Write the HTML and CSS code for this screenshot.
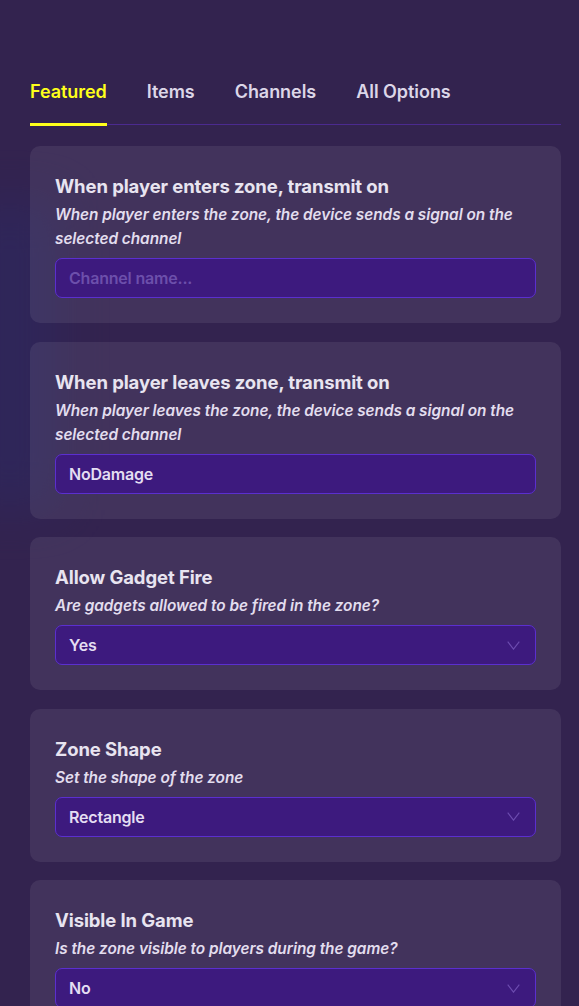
FILE: index.html
```html
<!DOCTYPE html>
<html lang="en">
<head>
<meta charset="utf-8">
<title>Zone options</title>
<link rel="stylesheet" href="styles.css">
</head>
<body>
<div class="glow"></div>
<main class="panel">
  <nav class="tabs">
    <span class="tab active">Featured</span>
    <span class="tab">Items</span>
    <span class="tab">Channels</span>
    <span class="tab">All Options</span>
  </nav>

  <section class="card">
    <h3 class="title">When player enters zone, transmit on</h3>
    <p class="desc">When player enters the zone, the device sends a signal on the selected channel</p>
    <div class="field placeholder">Channel name...</div>
  </section>

  <section class="card">
    <h3 class="title">When player leaves zone, transmit on</h3>
    <p class="desc">When player leaves the zone, the device sends a signal on the selected channel</p>
    <div class="field">NoDamage</div>
  </section>

  <section class="card">
    <h3 class="title">Allow Gadget Fire</h3>
    <p class="desc">Are gadgets allowed to be fired in the zone?</p>
    <div class="field select">Yes<svg class="chev" viewBox="0 0 13 9" width="13" height="9"><path d="M0.7 0.7 L6.5 8.2 L12.3 0.7" fill="none" stroke="currentColor" stroke-width="1.1"/></svg></div>
  </section>

  <section class="card">
    <h3 class="title">Zone Shape</h3>
    <p class="desc">Set the shape of the zone</p>
    <div class="field select">Rectangle<svg class="chev" viewBox="0 0 13 9" width="13" height="9"><path d="M0.7 0.7 L6.5 8.2 L12.3 0.7" fill="none" stroke="currentColor" stroke-width="1.1"/></svg></div>
  </section>

  <section class="card">
    <h3 class="title">Visible In Game</h3>
    <p class="desc">Is the zone visible to players during the game?</p>
    <div class="field select">No<svg class="chev" viewBox="0 0 13 9" width="13" height="9"><path d="M0.7 0.7 L6.5 8.2 L12.3 0.7" fill="none" stroke="currentColor" stroke-width="1.1"/></svg></div>
  </section>
</main>
</body>
</html>
```

FILE: styles.css
```css
html, body {
  margin: 0;
  padding: 0;
}
body {
  background: #33234f;
  font-family: Inter, "Noto Sans", "Liberation Sans", sans-serif;
  color: #e6e1ef;
  height: 1006px;
  overflow: hidden;
  position: relative;
}
.glow {
  position: absolute;
  left: -40px;
  top: 200px;
  width: 100px;
  height: 310px;
  background: #2b2a66;
  filter: blur(24px);
  opacity: 0.45;
}
.panel {
  position: relative;
  width: 531px;
  padding: 80px 0 0 30px;
}
.tabs {
  display: flex;
  gap: 40px;
  border-bottom: 1px solid #4b2a8f;
  margin-bottom: 21px;
}
.tab {
  position: relative;
  font-size: 18px;
  line-height: 24px;
  font-weight: 600;
  letter-spacing: -0.05px;
  color: #dcd6e8;
  padding-bottom: 20px;
}
.tab.active {
  color: #ffff1a;
}
.tab.active::after {
  content: "";
  position: absolute;
  left: 0;
  right: 0;
  bottom: -2px;
  height: 3px;
  background: #ffff1a;
}
.card {
  background: rgba(255, 255, 255, 0.075);
  border-radius: 10px;
  padding: 28px 25px 25px;
  margin-bottom: 18.5px;
}
.title {
  margin: 0;
  font-size: 18.5px;
  line-height: 24px;
  font-weight: 700;
  letter-spacing: -0.1px;
  color: #e8e4f0;
}
.desc {
  margin: 5px 0 7px;
  font-size: 15.4px;
  line-height: 24px;
  font-style: italic;
  font-weight: 600;
  letter-spacing: -0.05px;
  color: #e2ddee;
}
.field {
  display: flex;
  align-items: center;
  justify-content: space-between;
  height: 38px;
  padding: 0 15px 0 13px;
  background: #3d1a7e;
  border: 1px solid #5b2fcf;
  border-radius: 7px;
  font-size: 16px;
  font-weight: 600;
  letter-spacing: -0.2px;
  color: #e4def2;
}
.field.placeholder {
  color: #6c4fab;
}
.chev {
  color: #6d4cb0;
}
```
